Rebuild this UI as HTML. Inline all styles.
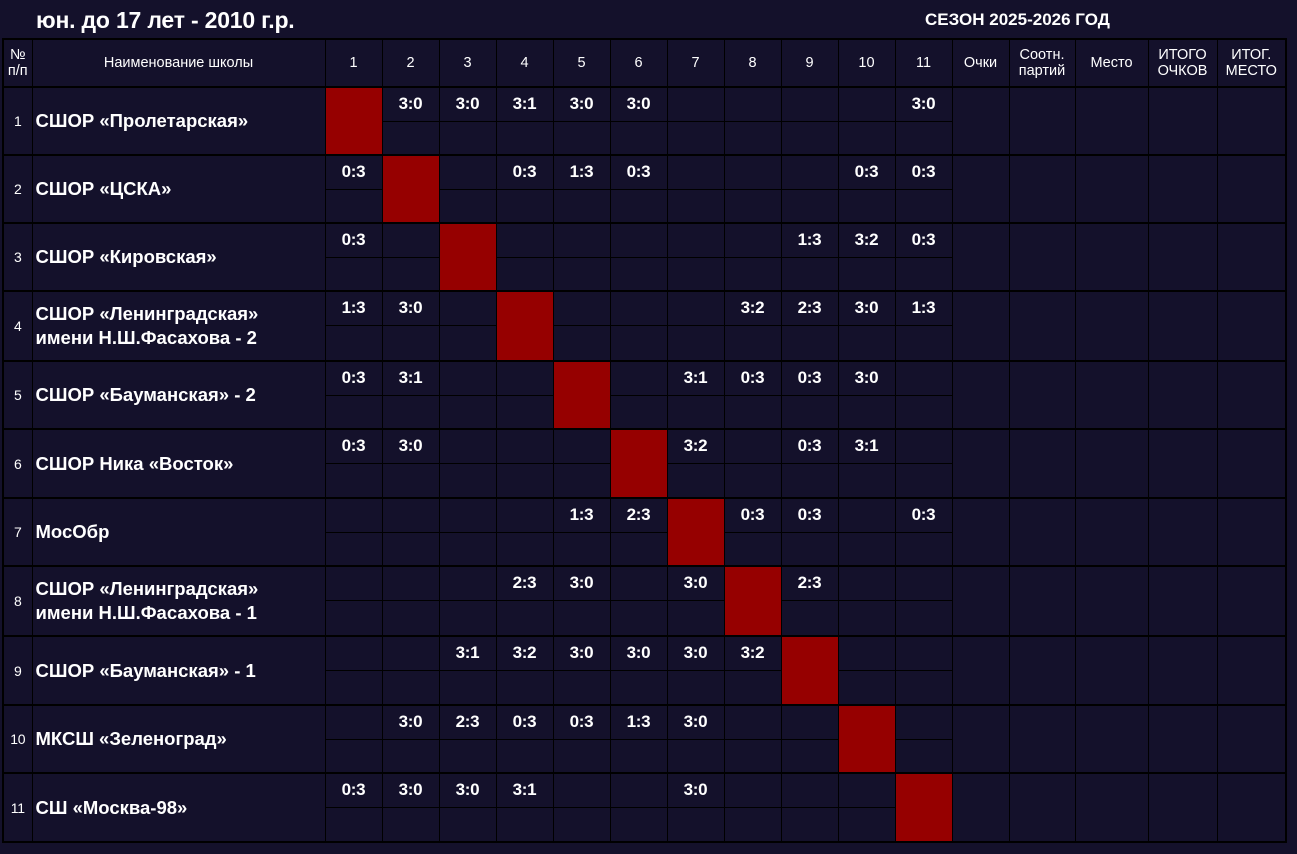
<!DOCTYPE html>
<html><head><meta charset="utf-8"><style>
body{margin:0;background:#14112b;width:1297px;height:854px;overflow:hidden;font-family:"Liberation Sans",sans-serif;color:#fff}
.t1{position:absolute;left:36px;top:7px;font-size:23px;font-weight:bold;letter-spacing:-0.2px}
.t2{position:absolute;left:925px;top:10px;font-size:17px;font-weight:bold}
table{position:absolute;left:2px;top:38px;border-collapse:collapse;table-layout:fixed;width:1283px;border:2px solid #000}
td{border:1px solid #000;border-top:2px solid #000;padding:0;text-align:center;vertical-align:middle;font-size:17px;font-weight:bold;letter-spacing:-0.3px}
tr.b td{border-top:1px solid #000}
td.n{font-weight:normal;font-size:14px}
td.nm{text-align:left;padding-left:3px;font-size:18.5px;line-height:24px;letter-spacing:0}
td.r{background:#960000}
th{border:1px solid #000;font-weight:normal;font-size:14.5px;height:46px;line-height:16px;padding:0}
tr.a{height:34px}tr.b{height:34px}
tr.b.y{height:35px}
tr.b.x{height:36px}
</style></head><body>
<div class="t1">юн. до 17 лет - 2010 г.р.</div>
<div class="t2">СЕЗОН 2025-2026 ГОД</div>
<table>
<colgroup><col style="width:29px"><col style="width:293px"><col style="width:57px"><col style="width:57px"><col style="width:57px"><col style="width:57px"><col style="width:57px"><col style="width:57px"><col style="width:57px"><col style="width:57px"><col style="width:57px"><col style="width:57px"><col style="width:57px"><col style="width:57px"><col style="width:66px"><col style="width:73px"><col style="width:69px"><col style="width:69px"></colgroup>
<tr><th>№<br>п/п</th><th>Наименование школы</th><th>1</th><th>2</th><th>3</th><th>4</th><th>5</th><th>6</th><th>7</th><th>8</th><th>9</th><th>10</th><th>11</th><th>Очки</th><th>Соотн.<br>партий</th><th>Место</th><th>ИТОГО<br>ОЧКОВ</th><th>ИТОГ.<br>МЕСТО</th></tr>

<tr class="a"><td class="n" rowspan="2">1</td><td class="nm" rowspan="2">СШОР «Пролетарская»</td><td class="r" rowspan="2"></td><td>3:0</td><td>3:0</td><td>3:1</td><td>3:0</td><td>3:0</td><td></td><td></td><td></td><td></td><td>3:0</td><td rowspan="2"></td><td rowspan="2"></td><td rowspan="2"></td><td rowspan="2"></td><td rowspan="2"></td></tr>
<tr class="b"><td></td><td></td><td></td><td></td><td></td><td></td><td></td><td></td><td></td><td></td></tr>

<tr class="a"><td class="n" rowspan="2">2</td><td class="nm" rowspan="2">СШОР «ЦСКА»</td><td>0:3</td><td class="r" rowspan="2"></td><td></td><td>0:3</td><td>1:3</td><td>0:3</td><td></td><td></td><td></td><td>0:3</td><td>0:3</td><td rowspan="2"></td><td rowspan="2"></td><td rowspan="2"></td><td rowspan="2"></td><td rowspan="2"></td></tr>
<tr class="b"><td></td><td></td><td></td><td></td><td></td><td></td><td></td><td></td><td></td><td></td></tr>

<tr class="a"><td class="n" rowspan="2">3</td><td class="nm" rowspan="2">СШОР «Кировская»</td><td>0:3</td><td></td><td class="r" rowspan="2"></td><td></td><td></td><td></td><td></td><td></td><td>1:3</td><td>3:2</td><td>0:3</td><td rowspan="2"></td><td rowspan="2"></td><td rowspan="2"></td><td rowspan="2"></td><td rowspan="2"></td></tr>
<tr class="b"><td></td><td></td><td></td><td></td><td></td><td></td><td></td><td></td><td></td><td></td></tr>

<tr class="a"><td class="n" rowspan="2">4</td><td class="nm" rowspan="2">СШОР «Ленинградская»<br>имени Н.Ш.Фасахова - 2</td><td>1:3</td><td>3:0</td><td></td><td class="r" rowspan="2"></td><td></td><td></td><td></td><td>3:2</td><td>2:3</td><td>3:0</td><td>1:3</td><td rowspan="2"></td><td rowspan="2"></td><td rowspan="2"></td><td rowspan="2"></td><td rowspan="2"></td></tr>
<tr class="b x"><td></td><td></td><td></td><td></td><td></td><td></td><td></td><td></td><td></td><td></td></tr>

<tr class="a"><td class="n" rowspan="2">5</td><td class="nm" rowspan="2">СШОР «Бауманская» - 2</td><td>0:3</td><td>3:1</td><td></td><td></td><td class="r" rowspan="2"></td><td></td><td>3:1</td><td>0:3</td><td>0:3</td><td>3:0</td><td></td><td rowspan="2"></td><td rowspan="2"></td><td rowspan="2"></td><td rowspan="2"></td><td rowspan="2"></td></tr>
<tr class="b"><td></td><td></td><td></td><td></td><td></td><td></td><td></td><td></td><td></td><td></td></tr>

<tr class="a"><td class="n" rowspan="2">6</td><td class="nm" rowspan="2">СШОР Ника «Восток»</td><td>0:3</td><td>3:0</td><td></td><td></td><td></td><td class="r" rowspan="2"></td><td>3:2</td><td></td><td>0:3</td><td>3:1</td><td></td><td rowspan="2"></td><td rowspan="2"></td><td rowspan="2"></td><td rowspan="2"></td><td rowspan="2"></td></tr>
<tr class="b y"><td></td><td></td><td></td><td></td><td></td><td></td><td></td><td></td><td></td><td></td></tr>

<tr class="a"><td class="n" rowspan="2">7</td><td class="nm" rowspan="2">МосОбр</td><td></td><td></td><td></td><td></td><td>1:3</td><td>2:3</td><td class="r" rowspan="2"></td><td>0:3</td><td>0:3</td><td></td><td>0:3</td><td rowspan="2"></td><td rowspan="2"></td><td rowspan="2"></td><td rowspan="2"></td><td rowspan="2"></td></tr>
<tr class="b"><td></td><td></td><td></td><td></td><td></td><td></td><td></td><td></td><td></td><td></td></tr>

<tr class="a"><td class="n" rowspan="2">8</td><td class="nm" rowspan="2">СШОР «Ленинградская»<br>имени Н.Ш.Фасахова - 1</td><td></td><td></td><td></td><td>2:3</td><td>3:0</td><td></td><td>3:0</td><td class="r" rowspan="2"></td><td>2:3</td><td></td><td></td><td rowspan="2"></td><td rowspan="2"></td><td rowspan="2"></td><td rowspan="2"></td><td rowspan="2"></td></tr>
<tr class="b x"><td></td><td></td><td></td><td></td><td></td><td></td><td></td><td></td><td></td><td></td></tr>

<tr class="a"><td class="n" rowspan="2">9</td><td class="nm" rowspan="2">СШОР «Бауманская» - 1</td><td></td><td></td><td>3:1</td><td>3:2</td><td>3:0</td><td>3:0</td><td>3:0</td><td>3:2</td><td class="r" rowspan="2"></td><td></td><td></td><td rowspan="2"></td><td rowspan="2"></td><td rowspan="2"></td><td rowspan="2"></td><td rowspan="2"></td></tr>
<tr class="b y"><td></td><td></td><td></td><td></td><td></td><td></td><td></td><td></td><td></td><td></td></tr>

<tr class="a"><td class="n" rowspan="2">10</td><td class="nm" rowspan="2">МКСШ «Зеленоград»</td><td></td><td>3:0</td><td>2:3</td><td>0:3</td><td>0:3</td><td>1:3</td><td>3:0</td><td></td><td></td><td class="r" rowspan="2"></td><td></td><td rowspan="2"></td><td rowspan="2"></td><td rowspan="2"></td><td rowspan="2"></td><td rowspan="2"></td></tr>
<tr class="b"><td></td><td></td><td></td><td></td><td></td><td></td><td></td><td></td><td></td><td></td></tr>

<tr class="a"><td class="n" rowspan="2">11</td><td class="nm" rowspan="2">СШ «Москва-98»</td><td>0:3</td><td>3:0</td><td>3:0</td><td>3:1</td><td></td><td></td><td>3:0</td><td></td><td></td><td></td><td class="r" rowspan="2"></td><td rowspan="2"></td><td rowspan="2"></td><td rowspan="2"></td><td rowspan="2"></td><td rowspan="2"></td></tr>
<tr class="b y"><td></td><td></td><td></td><td></td><td></td><td></td><td></td><td></td><td></td><td></td></tr>
</table>
</body></html>
